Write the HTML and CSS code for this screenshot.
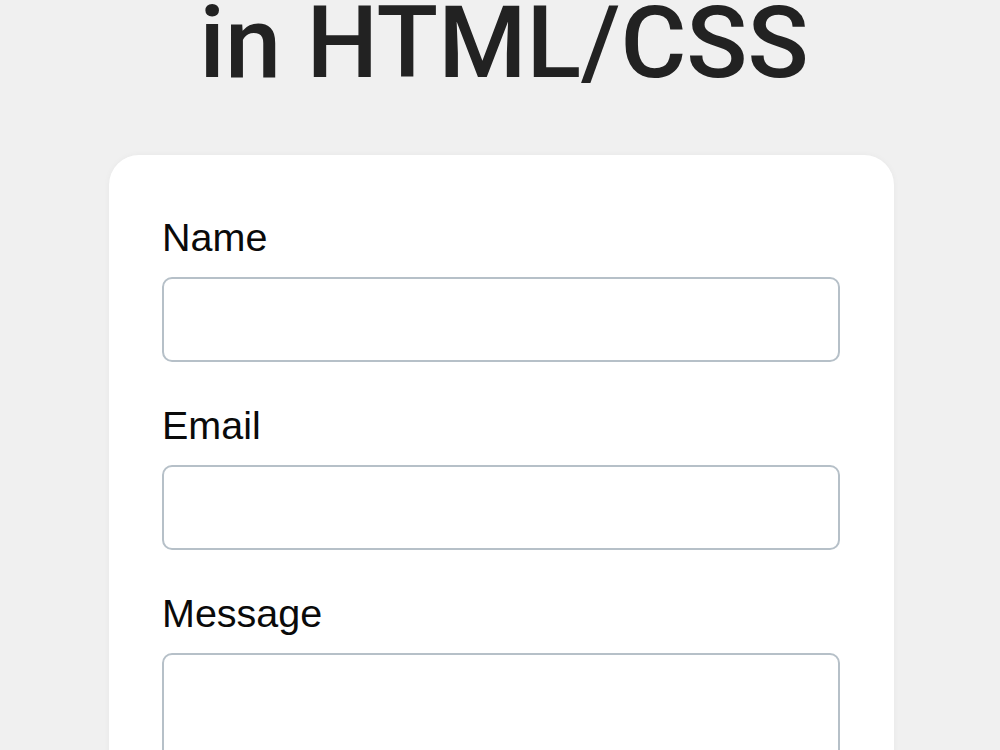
FILE: index.html
```html
<!DOCTYPE html>
<html lang="en">
<head>
    <meta charset="UTF-8">
    <meta name="viewport" content="width=device-width, initial-scale=1.0">
    <title>Contact Form in HTML/CSS</title>
    <link rel="stylesheet" href="styles.css">
</head>
<body>
    
    <h1 class="title">in HTML/CSS</h1>

    <!-- Contact form card -->
    <form class="card">
        <div class="field">
            <label for="name">Name</label>
            <input type="text" id="name">
        </div>

        <div class="field">
            <label for="email">Email</label>
            <input type="email" id="email">
        </div>

        <div class="field">
            <label for="message">Message</label>
            <textarea id="message"></textarea>
        </div>
    </form>
</body>
</html>
```

FILE: styles.css
```css
/* General body styling */
body {
    margin: 0;
    background-color: #f0f0f0;
    font-family: "Liberation Sans", Arial, sans-serif;
    overflow: hidden;
}

/* Heading */
.title {
    margin: -8px 0 0 8px;
    text-align: center;
    font-family: Roboto, "Liberation Sans", sans-serif;
    font-weight: 500;
    font-size: 101px;
    line-height: 101px;
    color: #222;
}

/* Card */
.card {
    width: 785px;
    margin: 62px 0 0 109px;
    padding: 59px 54px 0 53px;
    box-sizing: border-box;
    background-color: #fff;
    border-radius: 30px;
    box-shadow: 0 0 6px rgba(0, 0, 0, 0.04);
    height: 700px;
}

.field {
    margin-bottom: 40px;
}

.field label {
    display: block;
    font-size: 39.5px;
    line-height: 46px;
    color: #0a0a0a;
    margin-bottom: 17px;
}

.field input,
.field textarea {
    display: block;
    width: 100%;
    height: 85px;
    box-sizing: border-box;
    border: 2px solid #b6c0c8;
    border-radius: 10px;
    background: #fff;
    font-size: 24px;
    padding: 10px 16px;
    resize: none;
}

.field textarea {
    height: 200px;
}
```
